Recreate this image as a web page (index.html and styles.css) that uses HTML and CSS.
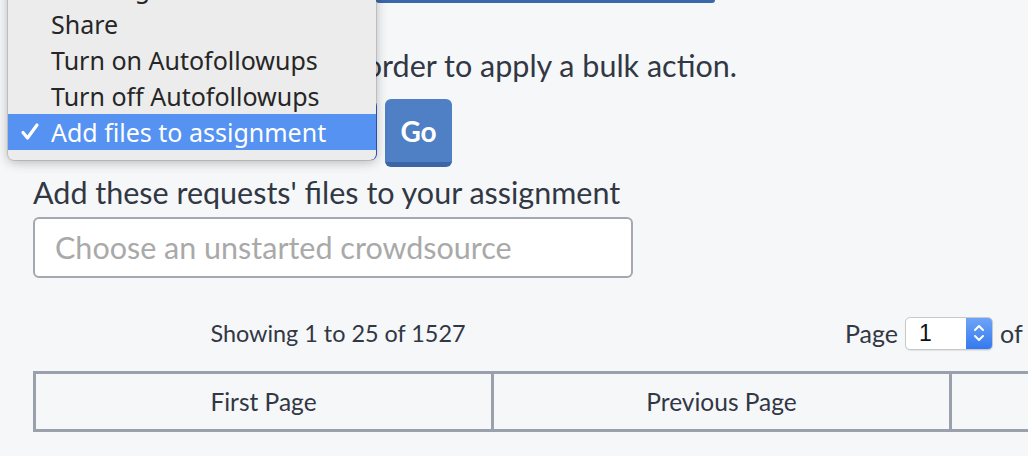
FILE: index.html
```html
<!DOCTYPE html>
<html>
<head>
<meta charset="utf-8">
<link rel="stylesheet" href="styles.css">
</head>
<body>
<div class="page">
  <div class="top-btn"></div>
  <p class="hint">Select requests below in order to apply a bulk action.</p>
  <div class="bulk-row">
    <div class="bulk-select">Add files to assignment</div>
    <button class="go">Go</button>
  </div>
  <label class="field-label">Add these requests' files to your assignment</label>
  <div class="text-input">Choose an unstarted crowdsource</div>
  <div class="pager-info">
    <div class="showing">Showing 1 to 25 of 1527</div>
    <div class="page-ctl">
      <span>Page</span>
      <div class="page-select"><span class="val">1</span><span class="stepper"><svg width="14" height="24" viewBox="0 0 14 24"><path d="M3 9 L7 5 L11 9 M3 15 L7 19 L11 15" fill="none" stroke="#fff" stroke-width="2" stroke-linecap="round" stroke-linejoin="round"/></svg></span></div>
      <span>of 62</span>
    </div>
  </div>
  <div class="pager">
    <div class="cell">First Page</div>
    <div class="cell">Previous Page</div>
    <div class="cell">Next Page</div>
    <div class="cell">Last Page</div>
  </div>
</div>
<div class="menu">
  <div class="item">Tracking</div>
  <div class="item">Share</div>
  <div class="item">Turn on Autofollowups</div>
  <div class="item">Turn off Autofollowups</div>
  <div class="item selected"><svg class="check" width="20" height="20" viewBox="0 0 20 20"><path d="M3 10.5 L7.5 16 L17 3" fill="none" stroke="#fff" stroke-width="3.2" stroke-linecap="round" stroke-linejoin="round"/></svg>Add files to assignment</div>
</div>
</body>
</html>
```
FILE: styles.css
```css
html, body {
  margin: 0;
  padding: 0;
  overflow: hidden;
  width: 1028px;
  height: 456px;
  background: #f6f7f9;
}
body {
  position: relative;
  font-family: Lato, "Open Sans", sans-serif;
  color: #313844;
}
.page {
  padding-left: 33px;
}
.top-btn {
  margin-left: 343px;
  width: 339px;
  height: 3px;
  background: #3b68a9;
  border-radius: 0 0 6px 6px;
}
.hint {
  margin: 0;
  padding-top: 44px;
  font-size: 30.5px;
  line-height: 36px;
  white-space: nowrap;
}
.bulk-row {
  display: flex;
  gap: 8px;
  margin-top: 16px;
  align-items: flex-start;
}
.bulk-select {
  width: 344px;
  height: 60px;
  margin-top: 1px;
  border: 2px solid #2f6be0;
  border-radius: 6px;
  background: #fff;
  font-size: 24px;
  line-height: 56px;
  padding-left: 14px;
  box-sizing: border-box;
}
.go {
  width: 67px;
  height: 68px;
  border: none;
  border-bottom: 5px solid #3b65a4;
  border-radius: 6px;
  background: #4f7fc4;
  color: #fff;
  font-family: Lato, sans-serif;
  font-weight: 700;
  font-size: 28px;
  padding: 0;
}
.field-label {
  display: block;
  margin-top: 8px;
  font-size: 30.5px;
  line-height: 34px;
  white-space: nowrap;
}
.text-input {
  margin-top: 8px;
  width: 600px;
  height: 61px;
  border: 2px solid #a3a8b1;
  border-radius: 6px;
  background: #fff;
  color: #a9a9a9;
  font-size: 30.5px;
  line-height: 57px;
  padding-left: 20px;
  box-sizing: border-box;
}
.pager-info {
  display: flex;
  align-items: center;
  margin-top: 37px;
  height: 36px;
  font-size: 23.4px;
  white-space: nowrap;
}
.showing {
  flex-shrink: 0;
  width: 610px;
  text-align: center;
}
.page-ctl {
  flex-shrink: 0;
  display: flex;
  align-items: center;
  gap: 7px;
  margin-left: 202px;
  font-size: 25px;
}
.page-select {
  display: flex;
  width: 88px;
  height: 33px;
  box-sizing: border-box;
  border: 1px solid #c9c9c9;
  border-radius: 5px;
  background: #fff;
  overflow: hidden;
  box-shadow: 0 1px 1px rgba(0,0,0,0.08);
}
.page-select .val {
  flex: 1;
  padding-left: 13px;
  font-family: "Liberation Sans", sans-serif;
  font-size: 23px;
  line-height: 31px;
  color: #111;
}
.page-select .stepper {
  width: 26px;
  display: flex;
  align-items: center;
  justify-content: center;
  background: linear-gradient(#6ea4f8, #3479ee);
}
.pager {
  display: flex;
  margin-top: 20px;
  border-top: 3px solid #9aa1ad;
  border-bottom: 3px solid #9aa1ad;
  border-left: 3px solid #9aa1ad;
  width: max-content;
}
.cell {
  flex-shrink: 0;
  width: 455px;
  height: 55px;
  line-height: 55px;
  text-align: center;
  font-size: 24.5px;
  border-right: 3px solid #9aa1ad;
}
.menu {
  position: absolute;
  left: 8px;
  top: -36px;
  width: 368px;
  padding: 6px 0 10px;
  background: #ececec;
  border-radius: 6px;
  box-shadow: 0 2px 12px rgba(0,0,0,0.28), 0 0 0 1px rgba(0,0,0,0.12);
  font-family: "Noto Sans", sans-serif;
  font-size: 25px;
  color: #262626;
}
.item {
  position: relative;
  height: 36px;
  line-height: 36px;
  padding-left: 43px;
  white-space: nowrap;
}
.item.selected {
  background: #5592f2;
  color: #fff;
}
.check {
  position: absolute;
  left: 12px;
  top: 8px;
}
```
